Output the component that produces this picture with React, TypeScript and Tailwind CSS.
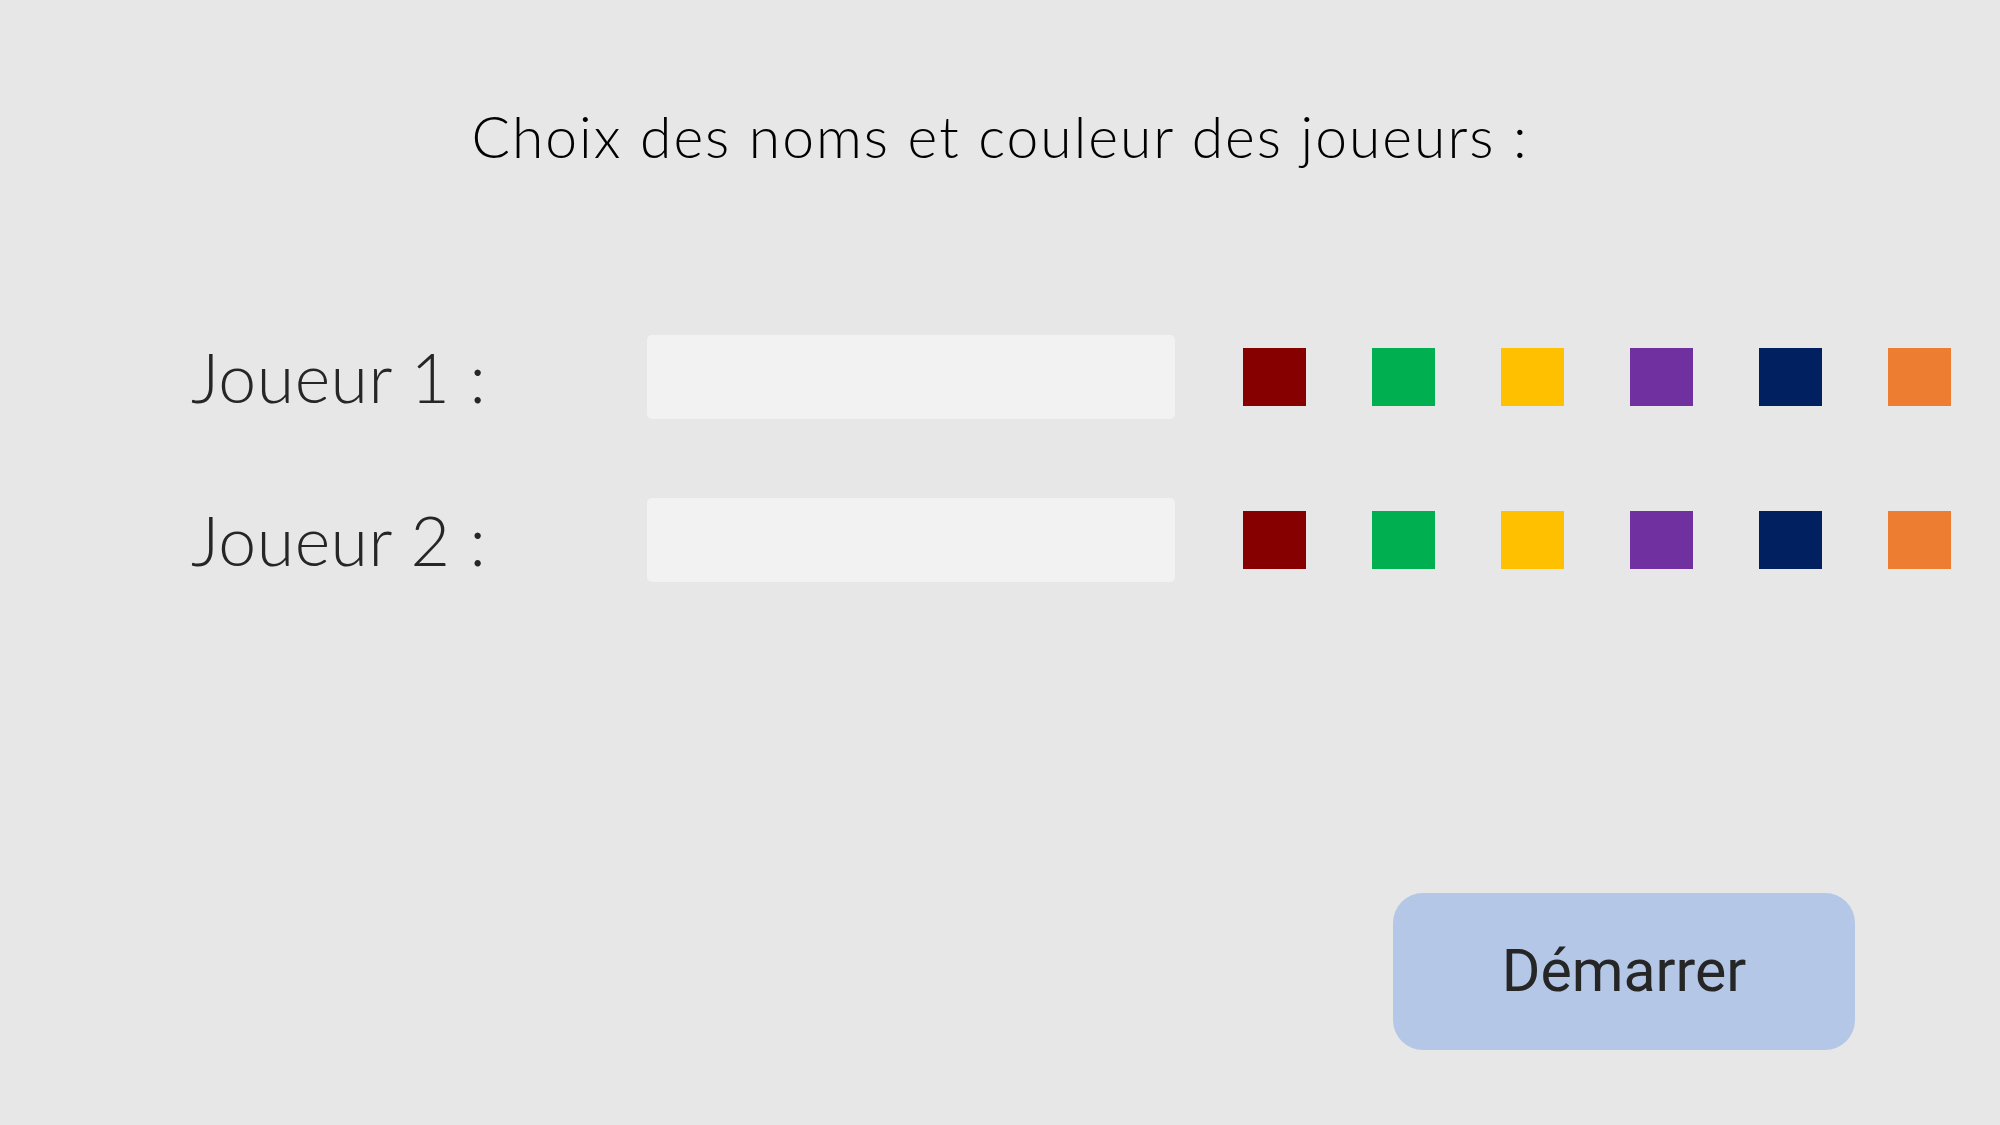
const COLORS = ["#860000", "#00b050", "#ffc000", "#7030a0", "#002060", "#ed7d31"];

function PlayerRow({ label }: { label: string }) {
  return (
    <div className="flex items-center">
      <div className="w-[456px] text-[68px] leading-none font-light tracking-[0.5px] text-[#262626] [font-family:Lato,'Liberation_Sans',sans-serif]">
        {label}
      </div>
      <input
        type="text"
        className="h-[84px] w-[528px] rounded-[5px] bg-[#f2f2f2] px-4 outline-none"
      />
      <div className="ml-[68px] flex gap-[66px]">
        {COLORS.map((c) => (
          <button
            key={c}
            className="h-[58px] w-[63px]"
            style={{ backgroundColor: c }}
          />
        ))}
      </div>
    </div>
  );
}

export default function App() {
  return (
    <main className="flex h-[1125px] w-full flex-col bg-[#e7e7e7] [font-family:Lato,'Liberation_Sans',sans-serif]">
      {/* titre */}
      <h1 className="pt-[108px] text-center text-[57px] leading-none font-light tracking-[2px] text-black">
        Choix des noms et couleur des joueurs :
      </h1>

      {/* joueurs */}
      <div className="mt-[170px] flex flex-col gap-[79px] pl-[191px]">
        <PlayerRow label="Joueur 1 :" />
        <PlayerRow label="Joueur 2 :" />
      </div>

      {/* bouton */}
      <div className="mt-auto flex justify-end pr-[145px] pb-[75px]">
        <button className="flex h-[157px] w-[462px] items-center justify-center rounded-[30px] bg-[#b4c7e7] text-[59px] text-[#262626] [font-family:Roboto,'Liberation_Sans',sans-serif]">
          Démarrer
        </button>
      </div>
    </main>
  );
}
